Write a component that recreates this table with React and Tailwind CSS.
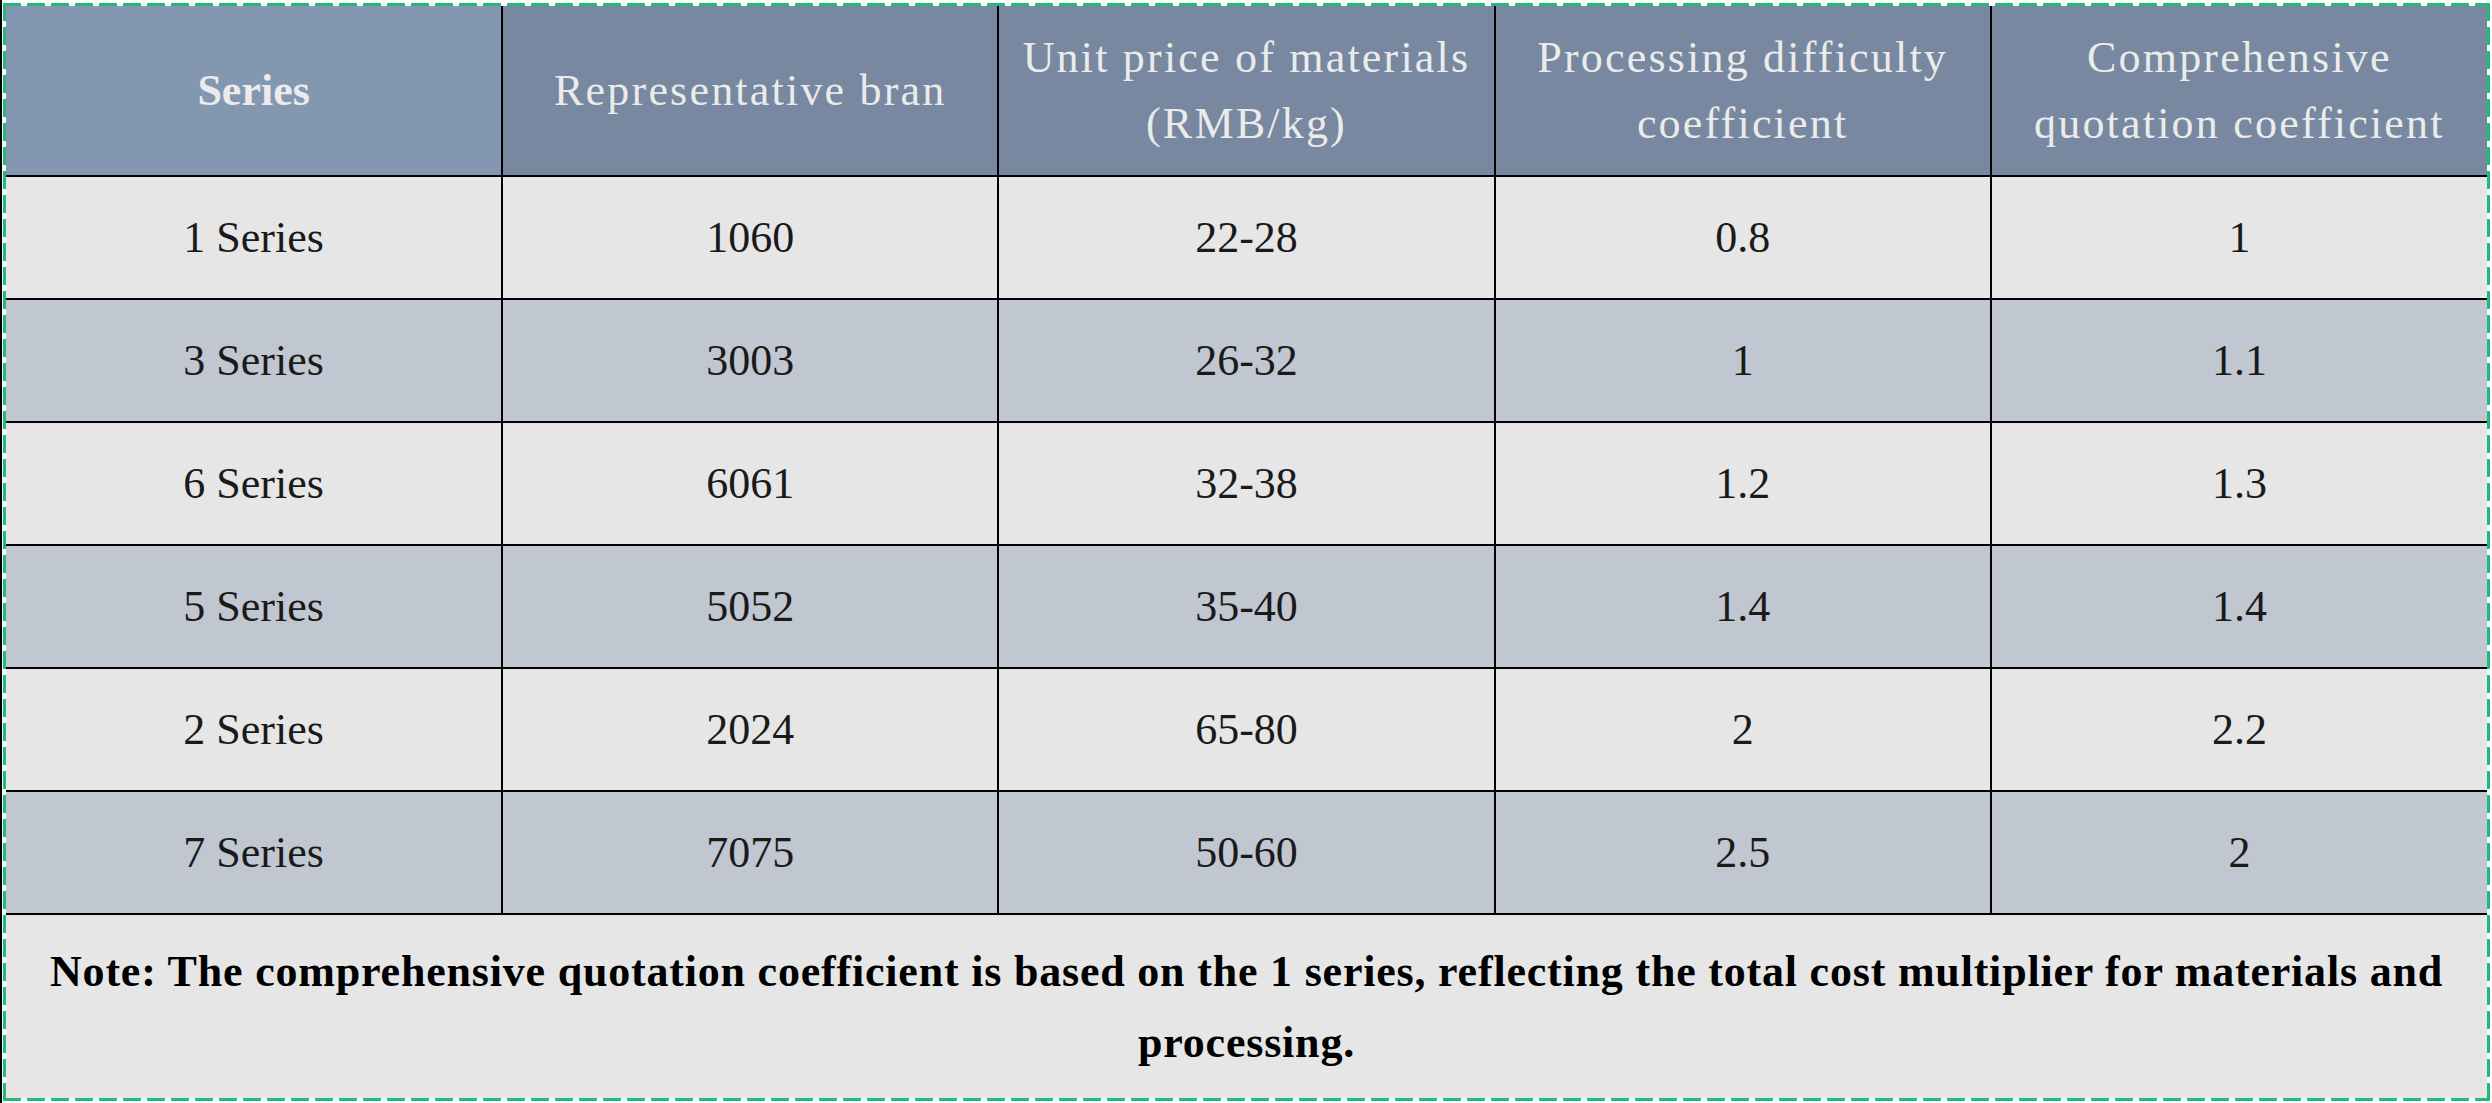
const rows = [
    ["1 Series", "1060", "22-28", "0.8", "1"],
    ["3 Series", "3003", "26-32", "1", "1.1"],
    ["6 Series", "6061", "32-38", "1.2", "1.3"],
    ["5 Series", "5052", "35-40", "1.4", "1.4"],
    ["2 Series", "2024", "65-80", "2", "2.2"],
    ["7 Series", "7075", "50-60", "2.5", "2"],
];

const App = () => {
    return (
        <div className="w-[2492px] h-[1103px] bg-white border-l-2 border-black pl-px pt-[3px] pr-[2px] pb-[2px] font-['Liberation_Serif',serif]">
            {/* green dashed frame, 18px dash / 6px gap */}
            <div className="h-full p-[3px] flex flex-col [background:repeating-linear-gradient(90deg,#21ba7b_0_18px,#fff_18px_24px)_top/100%_3px_no-repeat,repeating-linear-gradient(90deg,#21ba7b_0_18px,#fff_18px_24px)_bottom/100%_3px_no-repeat,repeating-linear-gradient(180deg,#21ba7b_0_18px,#fff_18px_24px)_left/3px_100%_no-repeat,repeating-linear-gradient(180deg,#21ba7b_0_18px,#fff_18px_24px)_right/3px_100%_no-repeat]">
                <table className="w-full table-fixed border-collapse">
                    <thead>
                        <tr className="h-[170px] text-[44px] text-[#ebebeb]">
                            <th className="bg-[#8497b0] border-r-2 border-b-2 border-black font-bold leading-[66px]">Series</th>
                            <th className="bg-[#7888a0] border-x-2 border-b-2 border-black font-normal tracking-[0.05em] leading-[66px]">Representative bran</th>
                            <th className="bg-[#7888a0] border-x-2 border-b-2 border-black font-normal tracking-[0.05em] leading-[66px]">Unit price of materials<br />(RMB/kg)</th>
                            <th className="bg-[#7888a0] border-x-2 border-b-2 border-black font-normal tracking-[0.05em] leading-[66px]">Processing difficulty<br />coefficient</th>
                            <th className="bg-[#7888a0] border-l-2 border-b-2 border-black font-normal tracking-[0.05em] leading-[66px]">Comprehensive<br />quotation coefficient</th>
                        </tr>
                    </thead>
                    <tbody>
                        {rows.map((row, i) => (
                            <tr key={row[0]} className={i % 2 === 0 ? "h-[123px] bg-[#e6e6e6]" : "h-[123px] bg-[#c0c7d0]"}>
                                {row.map((cell, j) => (
                                    <td key={j} className="border-2 border-black first:border-l-0 last:border-r-0 text-center text-[44px] text-[#1a1a1a]">{cell}</td>
                                ))}
                            </tr>
                        ))}
                    </tbody>
                </table>
                <div className="flex-1 bg-[#e6e6e6] flex items-center justify-center px-6 text-center">
                    <p className="text-[44px] font-bold leading-[71px] tracking-[0.8px] text-black">
                        Note: The comprehensive quotation coefficient is based on the 1 series, reflecting the total cost multiplier for materials and processing.
                    </p>
                </div>
            </div>
        </div>
    );
};

export default App;
